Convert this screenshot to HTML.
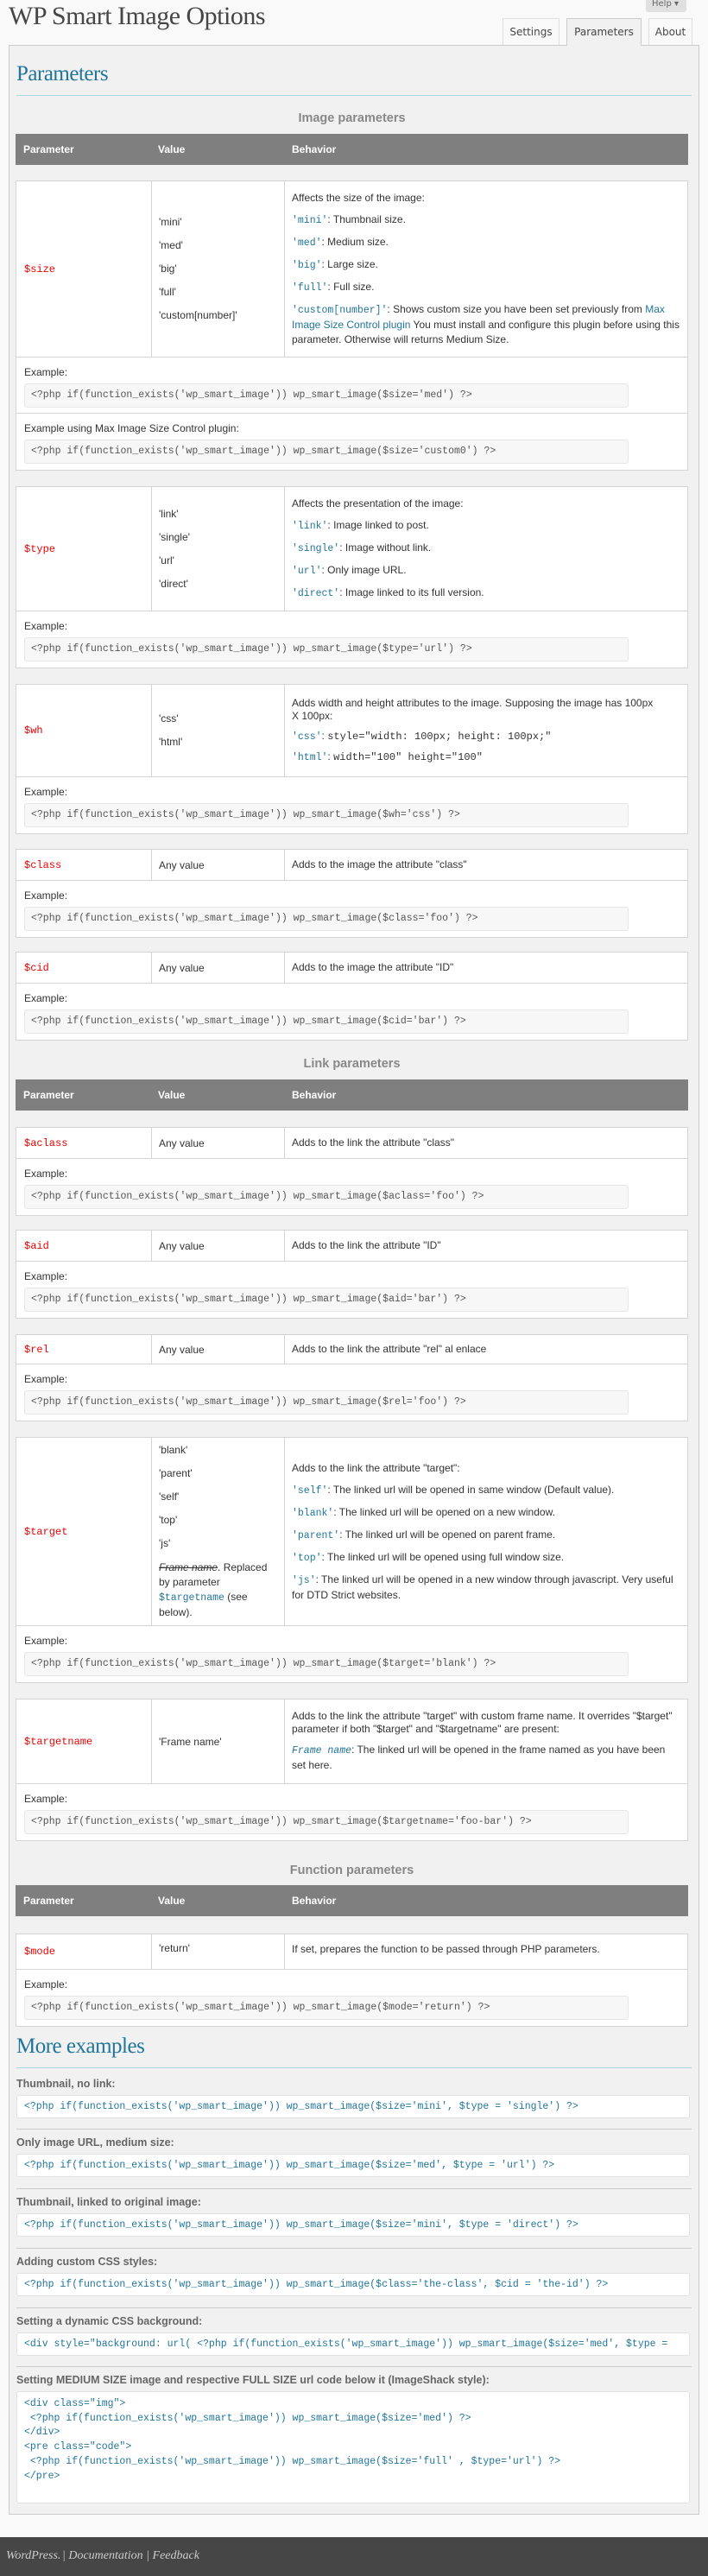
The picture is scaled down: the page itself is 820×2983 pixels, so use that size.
<!DOCTYPE html>
<html><head><meta charset="utf-8"><style>
*{box-sizing:border-box;margin:0;padding:0}
html,body{overflow:hidden}
body{width:820px;height:2983px;background:#f9f9f9;position:relative;font-family:"Liberation Sans",sans-serif;font-size:12px;color:#333}
.a{position:absolute}
.mono{font-family:"Liberation Mono",monospace}
h1{position:absolute;left:10px;top:2px;font:normal 30px "Liberation Serif",serif;color:#464646;letter-spacing:-0.5px}
.tab{position:absolute;top:21px;height:31px;border:1px solid #dfdfdf;border-bottom:none;background:#f9f9f9;font:12px "DejaVu Sans",sans-serif;color:#464646;text-align:center;line-height:30px}
.tab.on{background:#f1f1f1;border-color:#ccc;height:32px;z-index:2}
.help{position:absolute;left:748px;top:-2px;width:47px;height:16px;background:#e0e0e0;border-radius:0 0 3px 3px;font:10px "DejaVu Sans",sans-serif;color:#666;padding-left:7px;line-height:14px}
.box{position:absolute;left:10px;top:52px;width:800px;height:2860px;background:#f1f1f1;border:1px solid #ccc}
h2{position:absolute;left:19px;font:normal 25px "Liberation Serif",serif;color:#21759b;letter-spacing:-0.5px}
.hr{position:absolute;left:19px;width:782px;height:1px;background:#a9d6e1}
.title{position:absolute;left:18px;width:779px;text-align:center;font-size:14.5px;font-weight:bold;color:#888}
.th{position:absolute;left:18px;width:779px;height:36px;background:#7f7f7f;color:#fff;font-weight:bold;font-size:12px;line-height:36px}
.th span{position:absolute}
.g{position:absolute;left:18px;width:779px;background:#fff;border:1px solid #d4d4d4}
.row{display:flex;border-bottom:1px solid #d4d4d4;position:relative}
.row:last-child{border-bottom:none}
.c1{width:157px;border-right:1px solid #d4d4d4;padding-left:9px;display:flex;align-items:center;color:#e00;font-family:"Liberation Mono",monospace;font-size:12px}
.c2{width:154px;border-right:1px solid #d4d4d4;padding-left:8px;display:flex;flex-direction:column;justify-content:center;font-size:12px}
.c2 p{margin:6px 0;line-height:15px}
.c3{flex:1;padding:0 8px;display:flex;flex-direction:column;justify-content:center;font-size:12px;line-height:17px}
.c3 p{margin:4px 0}
code{font-family:"Liberation Mono",monospace;color:#21759b;font-size:11.5px}
.ex{height:65px;padding:10px 0 0 9px}
.ex .cb{margin-top:6px;width:700px;height:28px;background:#f7f7f7;border:1px solid #e6e6e6;border-radius:3px;font-family:"Liberation Mono",monospace;font-size:11.5px;color:#555;line-height:26px;padding-left:7px;white-space:pre;overflow:hidden}
.lbl{position:absolute;left:19px;font-weight:bold;font-size:12.5px;color:#666}
.mb{position:absolute;left:19px;width:780px;background:#fff;border:1px solid #e2e2e2;border-radius:3px;font-family:"Liberation Mono",monospace;font-size:11.5px;color:#21759b;padding-left:8px;white-space:pre;overflow:hidden;line-height:26px}
.sep{position:absolute;left:19px;width:782px;height:1px;background:#ccc}
.foot{position:absolute;left:0;top:2938px;width:820px;height:45px;background:#464646;color:#ccc;font:italic 14px "Liberation Serif",serif;overflow:hidden}
</style></head><body>
<h1>WP Smart Image Options</h1>
<div class="help">Help ▾</div>
<div class="tab" style="left:582px;width:66px">Settings</div>
<div class="tab on" style="left:656px;width:87px">Parameters</div>
<div class="tab" style="left:751px;width:51px">About</div>
<div class="box"></div>

<h2 style="top:72px">Parameters</h2>
<div class="hr" style="top:110px"></div>

<div class="title" style="top:129px">Image parameters</div>
<div class="th" style="top:155px"><span style="left:9px">Parameter</span><span style="left:165px">Value</span><span style="left:320px">Behavior</span></div>

<div class="g" style="top:209px">
 <div class="row" style="height:204px"><div class="c1">$size</div><div class="c2"><p>'mini'</p><p>'med'</p><p>'big'</p><p>'full'</p><p>'custom[number]'</p></div>
 <div class="c3"><p>Affects the size of the image:</p><p><code>'mini'</code>: Thumbnail size.</p><p><code>'med'</code>: Medium size.</p><p><code>'big'</code>: Large size.</p><p><code>'full'</code>: Full size.</p><p><code>'custom[number]'</code>: Shows custom size you have been set previously from <a style="color:#21759b">Max Image Size Control plugin</a> You must install and configure this plugin before using this parameter. Otherwise will returns Medium Size.</p></div></div>
 <div class="row ex" style="display:block">Example:<div class="cb">&lt;?php if(function_exists('wp_smart_image')) wp_smart_image($size='med') ?&gt;</div></div>
 <div class="row ex" style="display:block">Example using Max Image Size Control plugin:<div class="cb">&lt;?php if(function_exists('wp_smart_image')) wp_smart_image($size='custom0') ?&gt;</div></div>
</div>

<div class="g" style="top:563px">
 <div class="row" style="height:144px"><div class="c1">$type</div><div class="c2"><p>'link'</p><p>'single'</p><p>'url'</p><p>'direct'</p></div>
 <div class="c3"><p>Affects the presentation of the image:</p><p><code>'link'</code>: Image linked to post.</p><p><code>'single'</code>: Image without link.</p><p><code>'url'</code>: Only image URL.</p><p><code>'direct'</code>: Image linked to its full version.</p></div></div>
 <div class="row ex" style="display:block">Example:<div class="cb">&lt;?php if(function_exists('wp_smart_image')) wp_smart_image($type='url') ?&gt;</div></div>
</div>

<div class="g" style="top:792px">
 <div class="row" style="height:107px"><div class="c1">$wh</div><div class="c2"><p>'css'</p><p>'html'</p></div>
 <div class="c3" style="line-height:15px"><p style="padding-right:30px">Adds width and height attributes to the image. Supposing the image has 100px X 100px:</p><p><code>'css'</code>: <span class="mono">style="width: 100px; height: 100px;"</span></p><p><code>'html'</code>: <span class="mono">width="100" height="100"</span></p></div></div>
 <div class="row ex" style="display:block">Example:<div class="cb">&lt;?php if(function_exists('wp_smart_image')) wp_smart_image($wh='css') ?&gt;</div></div>
</div>

<div class="g" style="top:983px">
 <div class="row" style="height:36px"><div class="c1">$class</div><div class="c2">Any value</div><div class="c3">Adds to the image the attribute "class"</div></div>
 <div class="row ex" style="display:block">Example:<div class="cb">&lt;?php if(function_exists('wp_smart_image')) wp_smart_image($class='foo') ?&gt;</div></div>
</div>

<div class="g" style="top:1102px">
 <div class="row" style="height:36px"><div class="c1">$cid</div><div class="c2">Any value</div><div class="c3">Adds to the image the attribute "ID"</div></div>
 <div class="row ex" style="display:block">Example:<div class="cb">&lt;?php if(function_exists('wp_smart_image')) wp_smart_image($cid='bar') ?&gt;</div></div>
</div>

<div class="title" style="top:1224px">Link parameters</div>
<div class="th" style="top:1250px"><span style="left:9px">Parameter</span><span style="left:165px">Value</span><span style="left:320px">Behavior</span></div>

<div class="g" style="top:1305px">
 <div class="row" style="height:36px"><div class="c1">$aclass</div><div class="c2">Any value</div><div class="c3">Adds to the link the attribute "class"</div></div>
 <div class="row ex" style="display:block">Example:<div class="cb">&lt;?php if(function_exists('wp_smart_image')) wp_smart_image($aclass='foo') ?&gt;</div></div>
</div>

<div class="g" style="top:1424px">
 <div class="row" style="height:36px"><div class="c1">$aid</div><div class="c2">Any value</div><div class="c3">Adds to the link the attribute "ID"</div></div>
 <div class="row ex" style="display:block">Example:<div class="cb">&lt;?php if(function_exists('wp_smart_image')) wp_smart_image($aid='bar') ?&gt;</div></div>
</div>

<div class="g" style="top:1545px">
 <div class="row" style="height:34px"><div class="c1">$rel</div><div class="c2">Any value</div><div class="c3">Adds to the link the attribute "rel" al enlace</div></div>
 <div class="row ex" style="display:block">Example:<div class="cb">&lt;?php if(function_exists('wp_smart_image')) wp_smart_image($rel='foo') ?&gt;</div></div>
</div>

<div class="g" style="top:1664px">
 <div class="row" style="height:218px"><div class="c1">$target</div><div class="c2" style="padding-right:6px"><p>'blank'</p><p>'parent'</p><p>'self'</p><p>'top'</p><p>'js'</p><p style="line-height:17px"><i><s>Frame name</s></i>. Replaced by parameter <code>$targetname</code> (see below).</p></div>
 <div class="c3"><p>Adds to the link the attribute "target":</p><p><code>'self'</code>: The linked url will be opened in same window (Default value).</p><p><code>'blank'</code>: The linked url will be opened on a new window.</p><p><code>'parent'</code>: The linked url will be opened on parent frame.</p><p><code>'top'</code>: The linked url will be opened using full window size.</p><p><code>'js'</code>: The linked url will be opened in a new window through javascript. Very useful for DTD Strict websites.</p></div></div>
 <div class="row ex" style="display:block">Example:<div class="cb">&lt;?php if(function_exists('wp_smart_image')) wp_smart_image($target='blank') ?&gt;</div></div>
</div>

<div class="g" style="top:1967px">
 <div class="row" style="height:98px"><div class="c1">$targetname</div><div class="c2">'Frame name'</div>
 <div class="c3" style="line-height:15px"><p>Adds to the link the attribute "target" with custom frame name. It overrides "$target" parameter if both "$target" and "$targetname" are present:</p><p style="line-height:17px"><code><i>Frame name</i></code>: The linked url will be opened in the frame named as you have been set here.</p></div></div>
 <div class="row ex" style="display:block">Example:<div class="cb">&lt;?php if(function_exists('wp_smart_image')) wp_smart_image($targetname='foo-bar') ?&gt;</div></div>
</div>

<div class="title" style="top:2158px">Function parameters</div>
<div class="th" style="top:2183px"><span style="left:9px">Parameter</span><span style="left:165px">Value</span><span style="left:320px">Behavior</span></div>

<div class="g" style="top:2239px">
 <div class="row" style="height:41px"><div class="c1">$mode</div><div class="c2" style="justify-content:flex-start;padding-top:9px">'return'</div><div class="c3" style="justify-content:flex-start;padding-top:9px">If set, prepares the function to be passed through PHP parameters.</div></div>
 <div class="row ex" style="display:block">Example:<div class="cb">&lt;?php if(function_exists('wp_smart_image')) wp_smart_image($mode='return') ?&gt;</div></div>
</div>

<h2 style="top:2356px">More examples</h2>
<div class="hr" style="top:2394px"></div>

<div class="lbl" style="top:2406px">Thumbnail, no link:</div>
<div class="mb" style="top:2426px;height:27px">&lt;?php if(function_exists('wp_smart_image')) wp_smart_image($size='mini', $type = 'single') ?&gt;</div>
<div class="sep" style="top:2465px"></div>
<div class="lbl" style="top:2474px">Only image URL, medium size:</div>
<div class="mb" style="top:2494px;height:27px">&lt;?php if(function_exists('wp_smart_image')) wp_smart_image($size='med', $type = 'url') ?&gt;</div>
<div class="sep" style="top:2534px"></div>
<div class="lbl" style="top:2543px">Thumbnail, linked to original image:</div>
<div class="mb" style="top:2563px;height:27px">&lt;?php if(function_exists('wp_smart_image')) wp_smart_image($size='mini', $type = 'direct') ?&gt;</div>
<div class="sep" style="top:2603px"></div>
<div class="lbl" style="top:2612px">Adding custom CSS styles:</div>
<div class="mb" style="top:2632px;height:27px">&lt;?php if(function_exists('wp_smart_image')) wp_smart_image($class='the-class', $cid = 'the-id') ?&gt;</div>
<div class="sep" style="top:2672px"></div>
<div class="lbl" style="top:2681px">Setting a dynamic CSS background:</div>
<div class="mb" style="top:2701px;height:27px">&lt;div style="background: url( &lt;?php if(function_exists('wp_smart_image')) wp_smart_image($size='med', $type =</div>
<div class="sep" style="top:2740px"></div>
<div class="lbl" style="top:2749px">Setting MEDIUM SIZE image and respective FULL SIZE url code below it (ImageShack style):</div>
<div class="mb" style="top:2769px;height:130px;line-height:16.7px;padding-top:6px">&lt;div class="img"&gt;
 &lt;?php if(function_exists('wp_smart_image')) wp_smart_image($size='med') ?&gt;
&lt;/div&gt;
&lt;pre class="code"&gt;
 &lt;?php if(function_exists('wp_smart_image')) wp_smart_image($size='full' , $type='url') ?&gt;
&lt;/pre&gt;</div>

<div class="foot"><span class="a" style="left:7px;top:14px;white-space:nowrap">WordPress.</span><span class="a" style="left:72px;top:14px;white-space:nowrap">| Documentation | Feedback</span></div>
</body></html>
